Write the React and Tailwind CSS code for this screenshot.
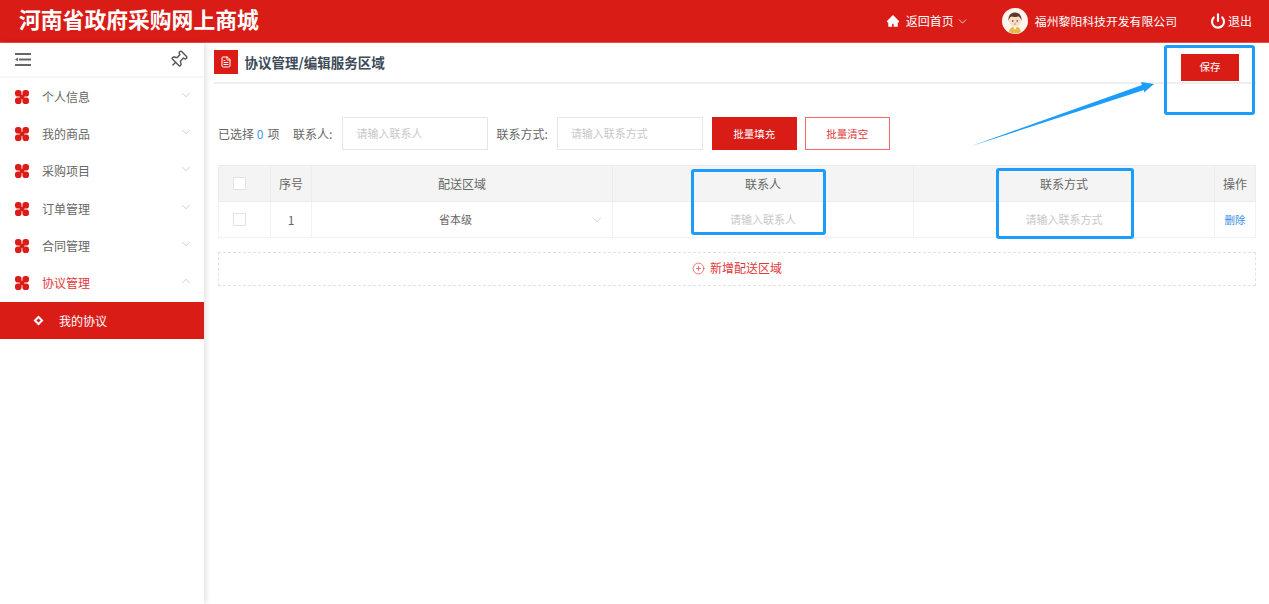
import React from "react";
import { AiFillHome } from "react-icons/ai";
import { ChevronDown, ChevronUp, CirclePlus, FileText, Pin, Power } from "lucide-react";

const cjk = { fontFamily: '"Noto Sans CJK SC", "Noto Sans", sans-serif' };
const menus = ["个人信息", "我的商品", "采购项目", "订单管理", "合同管理", "协议管理"];

const Flower = () => (
  <svg width="14" height="14" viewBox="0 0 15 15" className="fill-[#dc1c17]">
    <rect x="0" y="0" width="7" height="7" rx="3" />
    <rect x="8" y="0" width="7" height="7" rx="3" />
    <rect x="0" y="8" width="7" height="7" rx="3" />
    <rect x="8" y="8" width="7" height="7" rx="3" />
    <rect x="5" y="5" width="5" height="5" />
  </svg>
);

const Collapse = () => (
  <svg width="16" height="13" viewBox="0 0 16 13" className="fill-[#666]">
    <rect x="0" y="0" width="16" height="2" />
    <rect x="4" y="5.500" width="12" height="2" />
    <rect x="0" y="11" width="16" height="2" />
    <path d="M0 6.500 3 4.500v4z" />
  </svg>
);

const Avatar = () => (
  <svg width="26" height="26" viewBox="0 0 26 26" className="shrink-0">
    <circle cx="13" cy="13" r="13" fill="#fdf6ee" />
    <path d="M7 24c.6-4 3-5.600 6-5.600s5.400 1.600 6 5.600a13 13 0 0 1-12 0z" fill="#e8b94a" />
    <path d="M11 18.500h4l-2 3.500z" fill="#fff" />
    <circle cx="13" cy="12.500" r="6" fill="#fbdcc4" />
    <path d="M6.500 13c-.6-5.500 2.600-8.500 6.500-8.500s7.100 3 6.500 8.500c-.6-2.600-1.600-4-3-4.800-1.800 1-5.500 1.200-7.300.4-1.300.8-2.200 2.200-2.700 4.400z" fill="#5b3a29" />
    <circle cx="10.700" cy="13" r=".8" fill="#3a2a20" />
    <circle cx="15.300" cy="13" r=".8" fill="#3a2a20" />
    <path d="M12 16h2" stroke="#d9534f" strokeWidth=".7" />
  </svg>
);

const Checkbox = () => <span className="block w-[13px] h-[13px] ml-[14px] border border-[#e3e3e3] bg-white" />;

const Sidebar = () => (
  <aside className="w-[204px] shrink-0 bg-white shadow-[2px_0_6px_rgba(0,0,0,0.12)]">
    <div className="h-[35px] flex items-center justify-between pl-[15px] pr-[16px] border-b-2 border-[#f6f6f6]">
      <Collapse />
      <Pin size={19} strokeWidth={1.800} className="text-[#555] rotate-45" />
    </div>
    {menus.map((name, i) => (
      <div key={name} className="h-[37.300px] flex items-center pl-[15px] pr-[11.500px]">
        <Flower />
        <span className={`ml-[13px] text-[12px] flex-1 ${i === 5 ? "text-[#e0393a]" : "text-[#666]"}`}>{name}</span>
        {i === 5 ? (
          <ChevronUp size={14} strokeWidth={1} className="text-[#aaa] -mt-[4px]" />
        ) : (
          <ChevronDown size={14} strokeWidth={1} className="text-[#aaa] -mt-[4px]" />
        )}
      </div>
    ))}
    <div className="h-[37px] flex items-center bg-[#da1c17] text-white pl-[35px]">
      <span className="w-[7px] h-[7px] rotate-45 border-2 border-white" />
      <span className="ml-[17px] text-[12px] mt-[2px]">我的协议</span>
    </div>
  </aside>
);

const Toolbar = () => (
  <div className="ml-[4px] mt-[33px] h-[33px] flex items-center text-[12px] text-[#666]">
    <span>已选择 <span className="text-[#3b9bf5]">0</span> <span className="ml-[1.500px]">项</span></span>
    <span className="ml-[13.500px]">联系人:</span>
    <div className="ml-[10px] w-[146px] h-full border border-[#e6e6e6] flex items-center pl-[13px] text-[11px] text-[#c8c8c8]">请输入联系人</div>
    <span className="ml-[8px]">联系方式:</span>
    <div className="ml-[9px] w-[146px] h-full border border-[#e6e6e6] flex items-center pl-[13px] text-[11px] text-[#c8c8c8]">请输入联系方式</div>
    <button className="ml-[9px] w-[85px] h-full bg-[#da1c17] text-white text-[10.500px]">批量填充</button>
    <button className="ml-[8px] w-[85px] h-full border border-[#f06a6a] text-[#e0393a] text-[10.500px]">批量清空</button>
  </div>
);

const Table = () => (
  <table className="ml-[4px] mt-[15px] w-[1037px] table-fixed border-collapse text-[12px] text-[#666]">
    <colgroup>
      <col className="w-[52px]" />
      <col className="w-[41px]" />
      <col className="w-[301px]" />
      <col className="w-[301px]" />
      <col className="w-[301px]" />
      <col className="w-[41px]" />
    </colgroup>
    <thead>
      <tr className="h-[36px] bg-[#f4f4f4]">
        <th className="border border-[#ececec] font-normal"><Checkbox /></th>
        <th className="border border-[#ececec] font-normal">序号</th>
        <th className="border border-[#ececec] font-normal">配送区域</th>
        <th className="border border-[#ececec] font-normal">联系人</th>
        <th className="border border-[#ececec] font-normal">联系方式</th>
        <th className="border border-[#ececec] font-normal">操作</th>
      </tr>
    </thead>
    <tbody>
      <tr className="h-[36px]">
        <td className="border border-[#f2f2f2]"><Checkbox /></td>
        <td className="border border-[#f2f2f2] text-center">1</td>
        <td className="border border-[#f2f2f2] text-[11px]">
          <div className="flex items-center pl-[127px] pr-[8px] justify-between">
            <span>省本级</span>
            <ChevronDown size={14} strokeWidth={1} className="text-[#b5b5b5]" />
          </div>
        </td>
        <td className="border border-[#f2f2f2] text-center text-[11px] text-[#c8c8c8]">请输入联系人</td>
        <td className="border border-[#f2f2f2] text-center text-[11px] text-[#c8c8c8]">请输入联系方式</td>
        <td className="border border-[#f2f2f2] text-center text-[10.500px] text-[#3b8de8]">删除</td>
      </tr>
    </tbody>
  </table>
);

const App = () => (
  <div className="relative w-full h-screen overflow-hidden bg-white flex flex-col" style={cjk}>
    <header className="h-[43px] shrink-0 bg-[#da1c17] border-b border-[#e4504c] flex items-center text-white text-[12px] pl-[19px] pr-[17px]">
      <h1 className="text-[21.800px] font-semibold flex-1 whitespace-nowrap" style={{ fontFamily: '"Liberation Serif", "Noto Sans CJK SC", serif' }}>河南省政府采购网上商城</h1>
      <AiFillHome size={14} />
      <span className="ml-[6px]">返回首页</span>
      <ChevronDown size={13} strokeWidth={1.400} className="ml-[2px]" />
      <span className="ml-[33px]"><Avatar /></span>
      <span className="ml-[7px] text-[11.850px]">福州黎阳科技开发有限公司</span>
      <Power size={16} strokeWidth={3.200} className="ml-[33px]" />
      <span className="ml-[2px]">退出</span>
    </header>

    <div className="flex flex-1 min-h-0">
      <Sidebar />
      <main className="flex-1 pl-[10px] pr-[13px]">
        <div className="h-[41px] flex items-center border-b-2 border-[#eeeeee]">
          <span className="w-[24px] h-[24px] bg-[#da1c17] flex items-center justify-center -mt-[2px]">
            <FileText size={12} strokeWidth={2} className="text-white" />
          </span>
          <h2 className="ml-[6.500px] text-[13.500px] font-bold text-[#3d4a57] flex-1">协议管理/编辑服务区域</h2>
          <button className="w-[58px] h-[27px] mr-[17px] mt-[9px] bg-[#da1c17] text-white text-[10.500px]">保存</button>
        </div>
        <Toolbar />
        <Table />
        <div className="ml-[4px] mt-[14px] w-[1038px] h-[34px] border border-dashed border-[#e2e2e2] flex items-center justify-center pb-[2px] text-[12px] text-[#e0393a]">
          <CirclePlus size={13} strokeWidth={1.200} />
          <span className="ml-[5px]">新增配送区域</span>
        </div>
      </main>
    </div>

    {/* annotation marks on top of the screenshot */}
    <div className="absolute left-[1164px] top-[45px] w-[91px] h-[70px] border-[3px] border-[#1c9dfb] rounded-[3px]" />
    <div className="absolute left-[691px] top-[169px] w-[135px] h-[66px] border-[3px] border-[#1c9dfb] rounded-[3px]" />
    <div className="absolute left-[996px] top-[168px] w-[138px] h-[71px] border-[3px] border-[#1c9dfb] rounded-[3px]" />
    <svg className="absolute left-[965px] top-[78px]" width="195" height="72" viewBox="965 78 195 72">
      <polygon points="970,146.500 1142,85 1141,82 1154,84 1144,92.500 1144,90" fill="#1c9dfb" />
    </svg>
  </div>
);

export default App;
